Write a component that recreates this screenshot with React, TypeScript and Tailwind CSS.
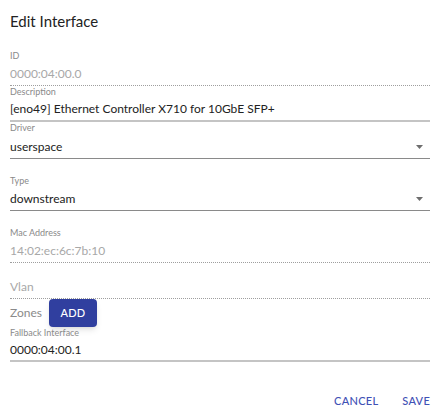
import React from "react";

type FieldProps = {
  label?: string;
  value: string;
  disabled?: boolean;
  placeholder?: boolean;
  select?: boolean;
  thick?: boolean;
  rowClass?: string;
};

function Field({ label, value, disabled, placeholder, select, thick, rowClass = "h-[24px]" }: FieldProps) {
  const border = disabled
    ? "border-b border-dotted border-[#9e9e9e]"
    : thick
      ? "border-b-2 border-[#c4c4c4]"
      : "border-b border-[#8a8a8a]";
  return (
    <div>
      {label && <div className="text-[9px] leading-[12px] text-[#8a8a8a]">{label}</div>}
      <div className={`flex items-center justify-between ${rowClass} ${border}`}>
        <span
          className={`text-[12px] ${disabled || placeholder ? "text-[#a8a8a8]" : "text-[#222]"}`}
        >
          {value}
        </span>
        {select && (
          <svg width="7" height="4" viewBox="0 0 7 4" className="mr-[7px]">
            <path d="M0 0 L7 0 L3.5 4 Z" fill="#6e6e6e" />
          </svg>
        )}
      </div>
    </div>
  );
}

export default function App() {
  return (
    <div className="w-[437px] h-[416px] bg-white px-[10px] pt-[9px] font-['Lato','Liberation_Sans',sans-serif]">
      <div className="w-[420px]">
        <h2 className="text-[15px] leading-[24px] text-[#222]">Edit Interface</h2>
        <div className="mt-[17px]">
          <Field label="ID" value="0000:04:00.0" disabled />
        </div>
        <Field label="Description" value="[eno49] Ethernet Controller X710 for 10GbE SFP+" thick />
        <div>
          <div className="text-[9px] leading-[12px] text-[#8a8a8a]">Driver</div>
          <div className="mt-[2px]">
            <Field value="userspace" select rowClass="h-[23px]" />
          </div>
        </div>
        <div className="mt-[16px]">
          <div className="text-[9px] leading-[12px] text-[#8a8a8a]">Type</div>
          <div className="mt-[1px]">
            <Field value="downstream" select rowClass="h-[23px]" />
          </div>
        </div>
        <div className="mt-[16px]">
          <Field label="Mac Address" value="14:02:ec:6c:7b:10" disabled />
        </div>
        <div className="mt-[12px]">
          <Field value="Vlan" placeholder disabled />
        </div>
        <div className="flex items-center h-[28px]">
          <span className="text-[12px] text-[#8a8a8a]">Zones</span>
          <button className="ml-[7px] h-[28px] w-[48px] rounded bg-[#303f9f] text-white text-[11px] font-medium tracking-wide shadow-md">
            ADD
          </button>
        </div>
        <Field label="Fallback Interface" value="0000:04:00.1" thick rowClass="h-[23px]" />
        <div className="flex justify-end gap-[24px] mt-[31px]">
          <button className="text-[11px] leading-[16px] font-medium text-[#3f51b5] tracking-wide">CANCEL</button>
          <button className="text-[11px] leading-[16px] font-medium text-[#3f51b5] tracking-wide">SAVE</button>
        </div>
      </div>
    </div>
  );
}
